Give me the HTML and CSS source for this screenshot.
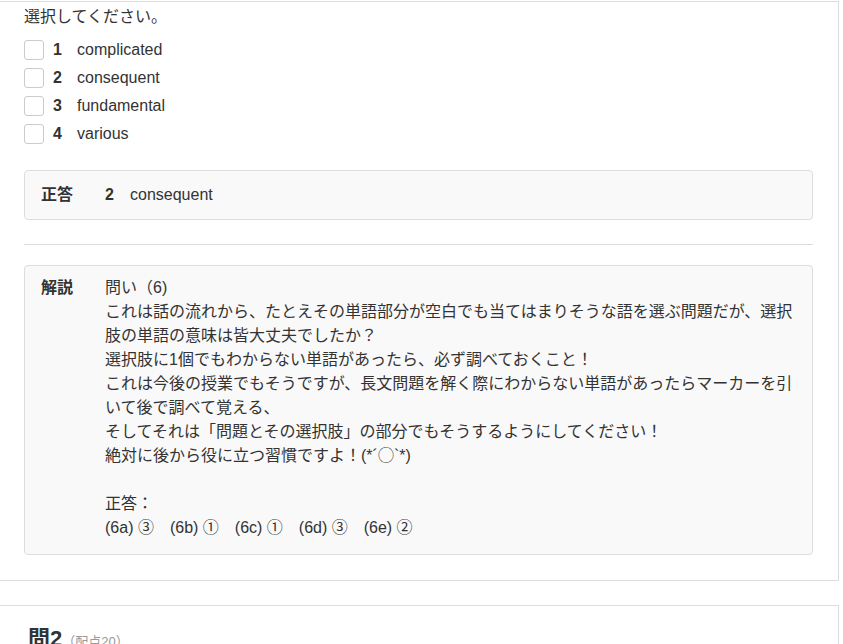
FILE: index.html
```html
<!DOCTYPE html>
<html lang="ja">
<head>
  <meta charset="UTF-8">
  <title>問題</title>
  <link rel="stylesheet" href="styles.css">
</head>
<body>
<div class="qcard">
  <div class="qtext">選択してください。</div>
  <ul class="choices">
    <li><span class="check"></span><span class="num">1</span><span>complicated</span></li>
    <li><span class="check"></span><span class="num">2</span><span>consequent</span></li>
    <li><span class="check"></span><span class="num">3</span><span>fundamental</span></li>
    <li><span class="check"></span><span class="num">4</span><span>various</span></li>
  </ul>

  <div class="answerBox">
    <div class="label">正答</div>
    <div class="num">2</div>
    <div>consequent</div>
  </div>

  <hr class="sep">

  <div class="answerBox explain">
    <div class="label">解説</div>
    <div class="body">
      問い（6)<br>
      これは話の流れから、たとえその単語部分が空白でも当てはまりそうな語を選ぶ問題だが、選択肢の単語の意味は皆大丈夫でしたか？<br>
      選択肢に1個でもわからない単語があったら、必ず調べておくこと！<br>
      これは今後の授業でもそうですが、長文問題を解く際にわからない単語があったらマーカーを引いて後で調べて覚える、<br>
      そしてそれは「問題とその選択肢」の部分でもそうするようにしてください！<br>
      絶対に後から役に立つ習慣ですよ！(*´◯`*)<br>
      <br>
      正答：<br>
      (6a) ③　(6b) ①　(6c) ①　(6d) ③　(6e) ②
    </div>
  </div>
</div>

<div class="qcard next">
  <h2 class="qtitle">問2<small>（配点20）</small></h2>
</div>
</body>
</html>
```

FILE: styles.css
```css
body {
  margin: 0;
  background-color: #fff;
  color: #333;
  font-family: "Liberation Sans", "Noto Sans CJK JP", sans-serif;
  font-size: 16px;
  line-height: 24px;
}

.qcard {
  width: 789px;
  margin-top: 1px;
  padding: 3px 25px 25px 24px;
  border: 1px solid #ddd;
  border-left: none;
}

.qcard.next {
  margin-top: 24px;
  padding-top: 18px;
  padding-bottom: 20px;
}

.qtext {
  height: 24px;
}

.choices {
  list-style: none;
  margin: 7px 0 0;
  padding: 0;
}

.choices > li {
  display: flex;
  align-items: center;
  height: 28px;
}

.choices .check {
  box-sizing: border-box;
  width: 20px;
  height: 20px;
  border: 1px solid #ccc;
  border-radius: 3px;
  background-color: #fff;
  margin-right: 9px;
  margin-top: -1px;
}

.choices .num {
  font-weight: bold;
  width: 24px;
}

.answerBox {
  display: flex;
  margin-top: 22px;
  padding: 12px 16px;
  border: 1px solid #ddd;
  border-radius: 4px;
  background-color: #f9f9f9;
}

.answerBox .label {
  font-weight: bold;
  width: 64px;
  flex: none;
}

.answerBox .num {
  font-weight: bold;
  width: 25px;
}

.answerBox.explain {
  margin-top: 20px;
  padding: 10px 16px 14px;
}

.answerBox.explain .body {
  flex: 1;
}

.sep {
  margin: 24px 0 0;
  border: none;
  border-top: 1px solid #ddd;
}

.qtitle {
  margin: 0 0 0 4px;
  font-size: 22px;
  line-height: 30px;
  font-weight: bold;
  height: 30px;
}

.qtitle small {
  font-size: 13px;
  font-weight: normal;
  color: #999;
}
```
